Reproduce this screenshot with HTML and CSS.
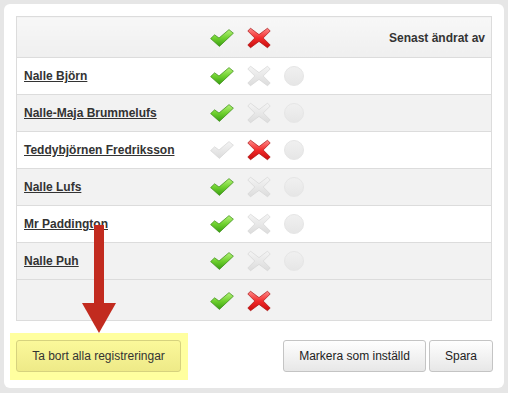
FILE: index.html
```html
<!DOCTYPE html>
<html lang="sv">

<head>
    <meta charset="UTF-8">
    <meta name="viewport" content="width=device-width, initial-scale=1.0">
    <title>Registreringar</title>
    <link rel="stylesheet" href="styles.css">
</head>

<body>
    <svg width="0" height="0" class="defs">
        <defs>
            <linearGradient id="gGreen" x1="0" y1="0" x2="0" y2="1">
                <stop offset="0" stop-color="#b6f27a" />
                <stop offset="0.5" stop-color="#6fd12f" />
                <stop offset="1" stop-color="#3a9e12" />
            </linearGradient>
            <linearGradient id="gRed" x1="0" y1="0" x2="0" y2="1">
                <stop offset="0" stop-color="#ff8a8a" />
                <stop offset="0.5" stop-color="#f22b2b" />
                <stop offset="1" stop-color="#c90d0d" />
            </linearGradient>
            <linearGradient id="gGray" x1="0" y1="0" x2="0" y2="1">
                <stop offset="0" stop-color="#f4f4f4" />
                <stop offset="1" stop-color="#dcdcdc" />
            </linearGradient>
            <symbol id="check" viewBox="0 0 24 18">
                <path d="M0.6 9.6 L4.6 5.8 L9 9 L19 0.6 L23.4 4.2 L9.4 17.4 Z" stroke-linejoin="round" />
            </symbol>
            <symbol id="cross" viewBox="0 0 24 22">
                <path d="M3.5 1.2 L12 7.6 L20.5 1.2 L23.2 4 L16.2 11 L23.2 18 L20.5 20.8 L12 14.4 L3.5 20.8 L0.8 18 L7.8 11 L0.8 4 Z" stroke-linejoin="round" />
            </symbol>
        </defs>
    </svg>

    <div class="panel">
        <table class="regTable">
            <colgroup>
                <col class="colName">
                <col class="colIcon">
                <col class="colIcon">
                <col class="colIcon">
                <col>
            </colgroup>
            <thead>
                <tr>
                    <th></th>
                    <th><svg class="ico ok"><use href="#check" /></svg></th>
                    <th><svg class="ico no"><use href="#cross" /></svg></th>
                    <th></th>
                    <th class="by">Senast ändrat av</th>
                </tr>
            </thead>
            <tbody>
                <tr>
                    <td class="name"><a href="#">Nalle Björn</a></td>
                    <td><svg class="ico ok"><use href="#check" /></svg></td>
                    <td><svg class="ico no off"><use href="#cross" /></svg></td>
                    <td><span class="dot"></span></td>
                    <td></td>
                </tr>
                <tr>
                    <td class="name"><a href="#">Nalle-Maja Brummelufs</a></td>
                    <td><svg class="ico ok"><use href="#check" /></svg></td>
                    <td><svg class="ico no off"><use href="#cross" /></svg></td>
                    <td><span class="dot"></span></td>
                    <td></td>
                </tr>
                <tr>
                    <td class="name"><a href="#">Teddybjörnen Fredriksson</a></td>
                    <td><svg class="ico ok off"><use href="#check" /></svg></td>
                    <td><svg class="ico no"><use href="#cross" /></svg></td>
                    <td><span class="dot"></span></td>
                    <td></td>
                </tr>
                <tr>
                    <td class="name"><a href="#">Nalle Lufs</a></td>
                    <td><svg class="ico ok"><use href="#check" /></svg></td>
                    <td><svg class="ico no off"><use href="#cross" /></svg></td>
                    <td><span class="dot"></span></td>
                    <td></td>
                </tr>
                <tr>
                    <td class="name"><a href="#">Mr Paddington</a></td>
                    <td><svg class="ico ok"><use href="#check" /></svg></td>
                    <td><svg class="ico no off"><use href="#cross" /></svg></td>
                    <td><span class="dot"></span></td>
                    <td></td>
                </tr>
                <tr>
                    <td class="name"><a href="#">Nalle Puh</a></td>
                    <td><svg class="ico ok"><use href="#check" /></svg></td>
                    <td><svg class="ico no off"><use href="#cross" /></svg></td>
                    <td><span class="dot"></span></td>
                    <td></td>
                </tr>
                <tr class="allRow">
                    <td></td>
                    <td><svg class="ico ok"><use href="#check" /></svg></td>
                    <td><svg class="ico no"><use href="#cross" /></svg></td>
                    <td></td>
                    <td></td>
                </tr>
            </tbody>
        </table>

        <div class="actions">
            <div class="highlight">
                <button class="btn btnYellow">Ta bort alla registreringar</button>
            </div>
            <div class="rightBtns">
                <button class="btn btnMark">Markera som inställd</button>
                <button class="btn btnSave">Spara</button>
            </div>
        </div>

        <svg class="arrow" width="34" height="108" viewBox="0 0 34 108">
            <rect x="12" y="0" width="10" height="79" fill="#c22b1f" />
            <polygon points="0,78 34,78 17,108" fill="#c22b1f" />
        </svg>
    </div>
</body>

</html>
```

FILE: styles.css
```css
* {
    margin: 0;
    padding: 0;
    box-sizing: border-box;
}

html,
body {
    width: 100%;
    height: 100%;
}

body {
    background-color: #e6e6e6;
    padding: 4px;
    font-family: "Liberation Sans", Arial, sans-serif;
    color: #333;
}

.defs {
    position: absolute;
    width: 0;
    height: 0;
}

.panel {
    position: relative;
    width: 500px;
    height: 384px;
    background-color: #fff;
    border-radius: 6px;
    padding: 12px 12px 17px;
}

.regTable {
    width: 476px;
    table-layout: fixed;
    border-collapse: collapse;
    border: 1px solid #dcdcdc;
}

.colName {
    width: 193px;
}

.colIcon {
    width: 37px;
}

.regTable th,
.regTable td {
    border-top: 1px solid #dcdcdc;
    padding: 0;
    text-align: left;
    vertical-align: middle;
    font-size: 12px;
    line-height: 14px;
}

.regTable thead th {
    height: 41px;
    background: linear-gradient(#f7f7f7, #efefef);
    padding-top: 1px;
}

.regTable tbody td {
    height: 37px;
}

.regTable tbody tr:nth-child(even) td {
    background-color: #f2f2f2;
}

.regTable tbody tr.allRow td {
    height: 41px;
    background-color: #f2f2f2;
    padding-top: 2px;
}

.regTable th.by {
    text-align: right;
    padding-right: 6px;
    font-weight: bold;
    color: #333;
}

.name {
    padding-left: 7px !important;
}

.name a {
    color: #333;
    font-weight: bold;
    text-decoration: underline;
    white-space: nowrap;
}

.ico {
    display: block;
    width: 24px;
    height: 18px;
}

.ico.no {
    height: 22px;
}

.ok {
    fill: url(#gGreen);
    stroke: #3b8a18;
    stroke-width: 0.7;
}

.no {
    fill: url(#gRed);
    stroke: #a71414;
    stroke-width: 0.7;
}

.ico.off {
    fill: url(#gGray);
    stroke: #d6d6d6;
}

.dot {
    display: block;
    width: 20px;
    height: 20px;
    border-radius: 50%;
    background: linear-gradient(#f0f0f0, #e6e6e6);
    border: 1px solid #e6e6e6;
}

.actions {
    display: flex;
    justify-content: space-between;
    align-items: center;
    margin-top: 19px;
}

.highlight {
    background-color: #ffff9f;
    padding: 7px 7px 8px 6px;
    margin: -7px 0 -8px -6px;
}

.rightBtns {
    display: flex;
    gap: 3px;
    margin-right: -1px;
}

.btn {
    height: 32px;
    padding: 0;
    border: 1px solid #c4c4c4;
    border-radius: 3px;
    background: linear-gradient(#fefefe, #e7e7e7);
    font-family: "Liberation Sans", Arial, sans-serif;
    font-size: 12px;
    color: #222;
}

.btnYellow {
    width: 165px;
    background: linear-gradient(#fbf89a, #eeea88);
    border-color: #d6d27e;
    color: #333;
}

.btnMark {
    width: 143px;
}

.btnSave {
    width: 64px;
}

.arrow {
    position: absolute;
    left: 78px;
    top: 221px;
}
```
